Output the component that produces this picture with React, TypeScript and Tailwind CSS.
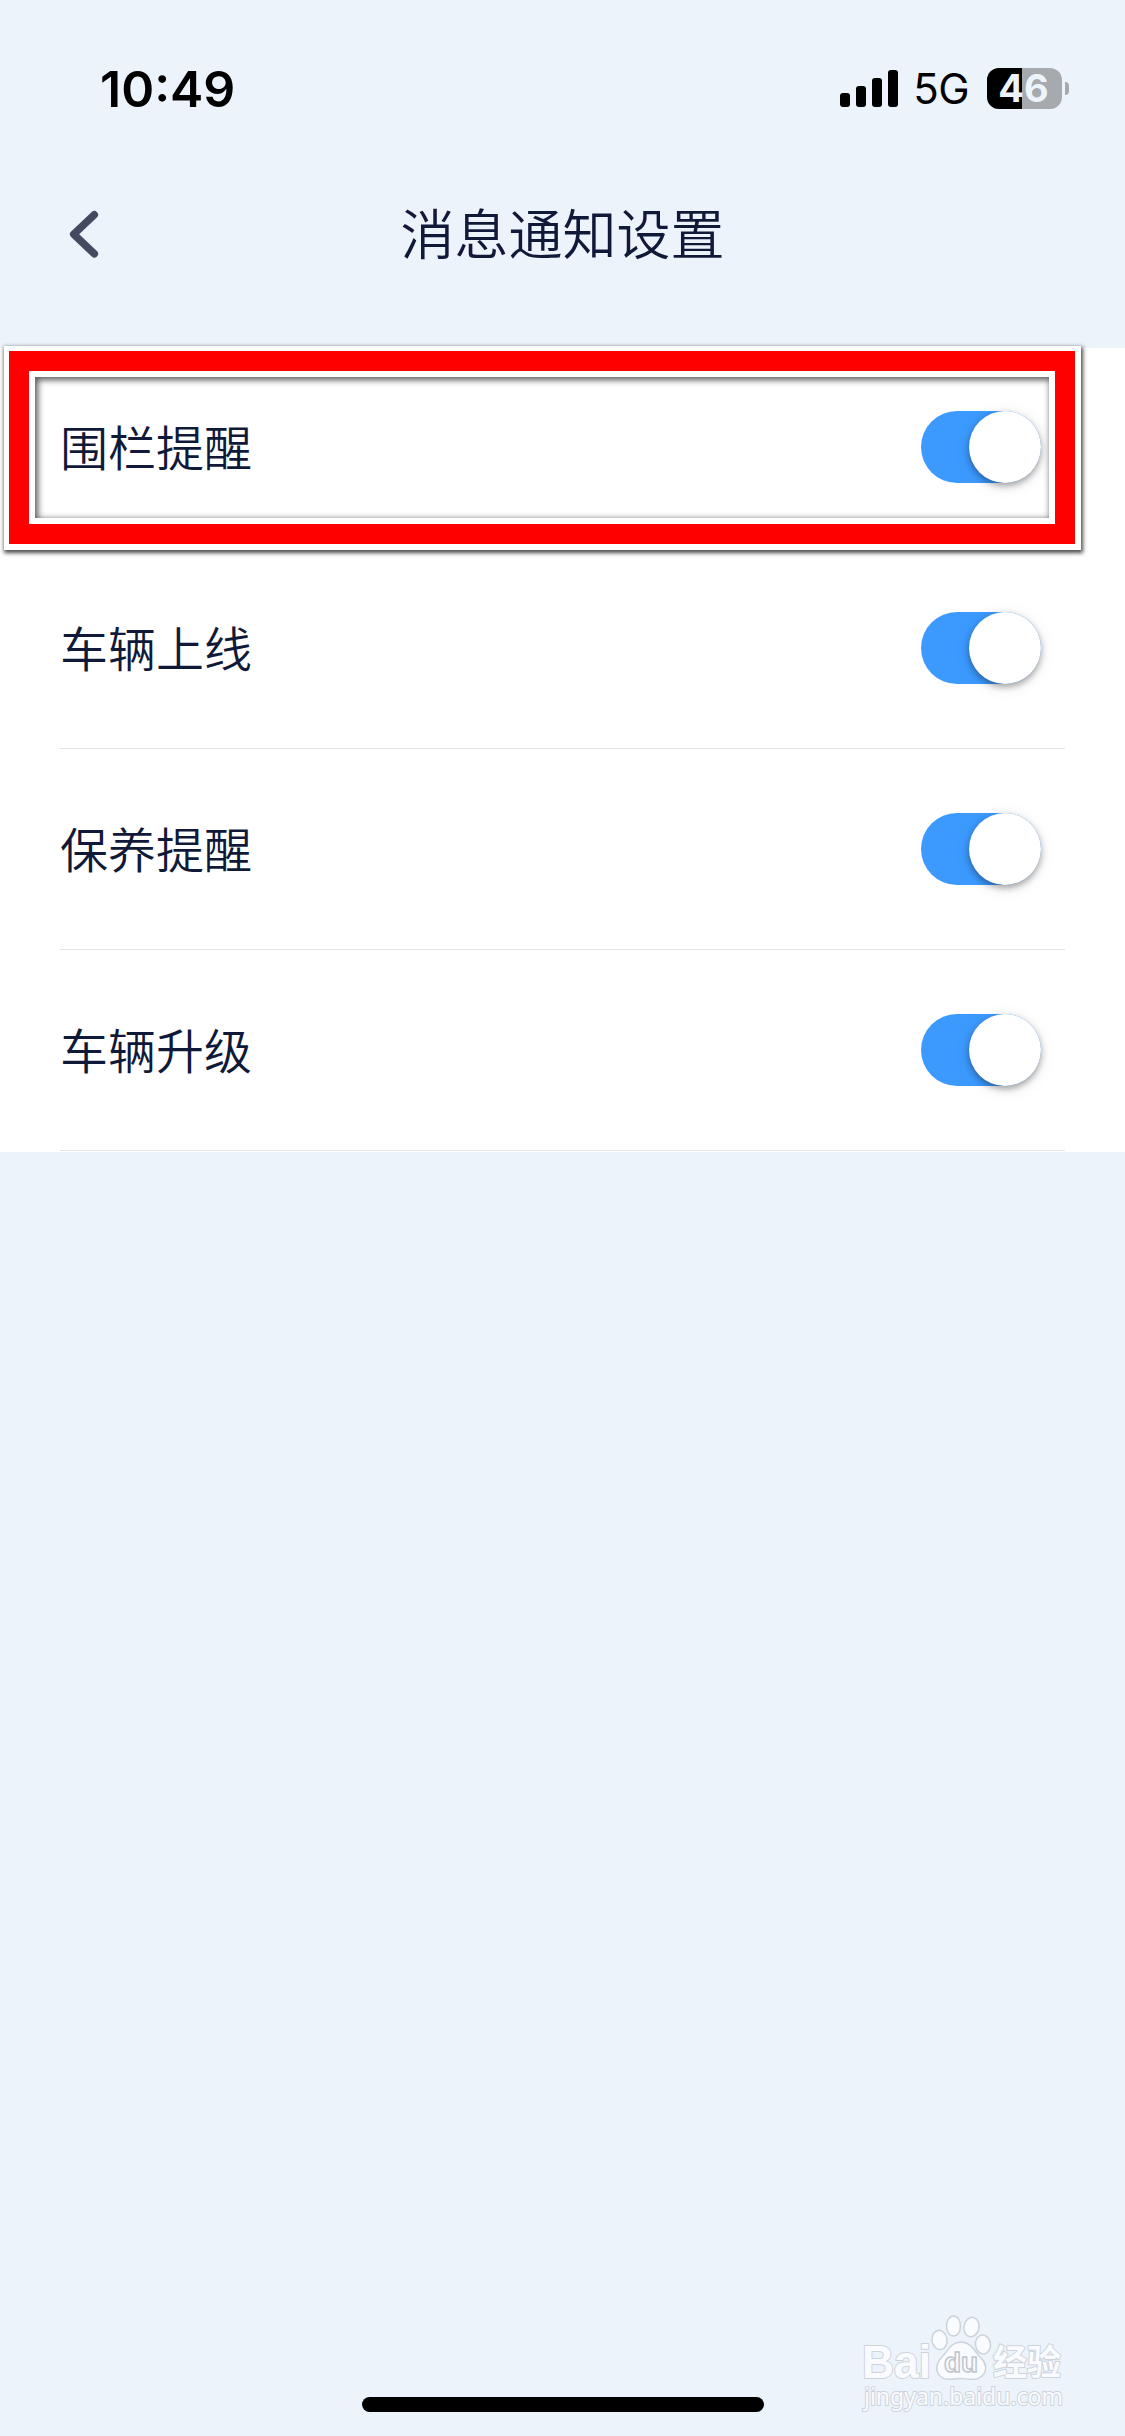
import { useState } from 'react';

const FONT_UI = "font-['Inter','Noto_Sans_CJK_SC',sans-serif]";
const FONT_CJK = "font-['Noto_Sans_CJK_SC',sans-serif]";

type Item = { key: string; label: string; highlight?: boolean };

const ITEMS: Item[] = [
  { key: 'fence', label: '围栏提醒', highlight: true },
  { key: 'online', label: '车辆上线' },
  { key: 'maintain', label: '保养提醒' },
  { key: 'upgrade', label: '车辆升级' },
];

function SignalIcon() {
  return (
    <svg width="58" height="38" viewBox="0 0 58 38">
      <rect x="0" y="23" width="10" height="14" rx="3" />
      <rect x="16" y="16" width="10" height="21" rx="3" />
      <rect x="32" y="8" width="10" height="29" rx="3" />
      <rect x="48" y="0" width="10" height="37" rx="3" />
    </svg>
  );
}

function Battery({ level }: { level: number }) {
  return (
    <div className="flex items-center gap-[3px]">
      <div className="relative flex h-[41px] w-[75px] justify-center rounded-[12px] bg-[#a6a9ad] pr-[2px]">
        <div className="absolute inset-y-0 left-0 rounded-l-[12px] bg-black" style={{ width: `${level}%` }} />
        <span className="relative text-[38px] leading-[41px] font-bold text-[#ecf3fb]">{level}</span>
      </div>
      <div className="h-[13px] w-1 rounded-r-full bg-[#a6a9ad]" />
    </div>
  );
}

function StatusBar() {
  return (
    <div className={`flex h-[132px] items-start justify-between pr-14 pl-[100px] ${FONT_UI}`}>
      <span className="mt-[59px] text-[50px] leading-[60px] font-semibold text-black">10:49</span>
      <div className="mt-[68px] flex h-[41px] items-center">
        <SignalIcon />
        <span className="mr-[18px] ml-[15px] text-[42px] leading-[42px] tracking-[-0.6px] text-black">5G</span>
        <Battery level={46} />
      </div>
    </div>
  );
}

function NavBar() {
  return (
    <div className="grid h-[216px] grid-cols-[140px_1fr_140px] pt-[64px]">
      <button className="h-[76px] pl-[68px]" aria-label="返回">
        <svg width="32" height="48" viewBox="0 0 32 48" fill="none">
          <path d="M26.3 4.8 5.7 24.2 26.3 43.8" stroke="#454a61" strokeWidth="7.5" strokeLinecap="round" strokeLinejoin="round" />
        </svg>
      </button>
      <h1 className={`-mt-[2px] text-center text-[54px] leading-[76px] font-[350] text-[#101a38] ${FONT_CJK}`}>消息通知设置</h1>
    </div>
  );
}

function Toggle({ on, onChange }: { on: boolean; onChange: () => void }) {
  return (
    <button
      role="switch"
      aria-checked={on}
      onClick={onChange}
      className={`flex h-[72px] w-[120px] rounded-full ${on ? 'justify-end bg-[#3c9aff]' : 'justify-start bg-gray-300'}`}
    >
      <span className="size-[72px] rounded-full bg-white shadow-[0_3px_6px_rgba(0,0,0,0.32),0_3px_16px_rgba(0,0,0,0.1)]" />
    </button>
  );
}

// 红色标注框，盖在第一行上面
function HighlightFrame() {
  return (
    <div className="pointer-events-none absolute top-[-2px] left-1 h-[204px] w-[1077px] border-t-[5px] border-r-[6px] border-b-[6px] border-l-[5px] border-white shadow-[1px_2px_4px_1px_rgba(0,0,0,0.7)]">
      <div className="h-full border-[20px] border-[#ff0000]">
        <div className="h-full border-[6px] border-white">
          <div className="h-full shadow-[inset_2px_2px_6px_1px_rgba(0,0,0,0.65)]" />
        </div>
      </div>
    </div>
  );
}

function Watermark() {
  return (
    <svg className="absolute right-[55px] bottom-[14px]" width="210" height="116" viewBox="0 0 210 116">
      <g fill="#f9fbff" stroke="#cdd3da" strokeWidth="1.5" strokeLinejoin="round">
        <ellipse cx="79.5" cy="34" rx="7.5" ry="9.7" transform="rotate(-8 79.5 34)" />
        <ellipse cx="93.5" cy="20" rx="7" ry="10" />
        <ellipse cx="111.5" cy="21" rx="7.5" ry="9.7" transform="rotate(12 111.5 21)" />
        <ellipse cx="123" cy="38.5" rx="7.5" ry="9.5" transform="rotate(-8 123 38.5)" />
        <path d="M101 36C91 36 88 45 82 51C76 57 75 65 80 70C86 76 94 72 101 72.500C109 73 117 75 122 70C128 64 126 57 121 52C114 45 111 36 101 36Z" />
      </g>
      <g fill="#f9fbff" stroke="#cdd3da" strokeWidth="2" paintOrder="stroke">
        <text x="2" y="72" fontFamily="Liberation Sans, sans-serif" fontWeight="700" fontSize="46" textLength="69" lengthAdjust="spacingAndGlyphs">Bai</text>
        <text x="133" y="69" fontFamily="Noto Sans CJK SC, sans-serif" fontWeight="700" fontSize="35" textLength="68" lengthAdjust="spacingAndGlyphs">经验</text>
        <text x="4" y="99" fontFamily="Noto Sans, sans-serif" fontSize="24" textLength="199" lengthAdjust="spacingAndGlyphs">jingyan.baidu.com</text>
      </g>
      <text x="84" y="66" fill="#f9fbff" stroke="#bfc6ce" strokeWidth="1.5" fontFamily="Liberation Sans, sans-serif" fontWeight="700" fontSize="28" textLength="34" lengthAdjust="spacingAndGlyphs">du</text>
    </svg>
  );
}

export default function App() {
  const [values, setValues] = useState<Record<string, boolean>>({
    fence: true,
    online: true,
    maintain: true,
    upgrade: true,
  });

  return (
    <div className="relative flex h-[2436px] w-[1125px] flex-col overflow-hidden bg-[#ecf3fb]">
      <StatusBar />
      <NavBar />

      <div className="bg-white">
        {ITEMS.map(item => (
          <div key={item.key} className="relative h-[201px] px-[60px]">
            <div className="flex h-[200px] items-start justify-between border-b border-[#e3e4ea] pt-[63px] pr-6">
              <span className={`-mt-[2px] text-[48px] leading-[72px] font-[350] text-[#101a38] ${FONT_CJK}`}>{item.label}</span>
              <Toggle
                on={values[item.key]}
                onChange={() => setValues(prev => ({ ...prev, [item.key]: !prev[item.key] }))}
              />
            </div>
            {item.highlight && <HighlightFrame />}
          </div>
        ))}
      </div>

      <Watermark />
      {/* 底部横条 */}
      <div className="mx-auto mt-auto mb-6 h-[15px] w-[402px] rounded-full bg-black" />
    </div>
  );
}
